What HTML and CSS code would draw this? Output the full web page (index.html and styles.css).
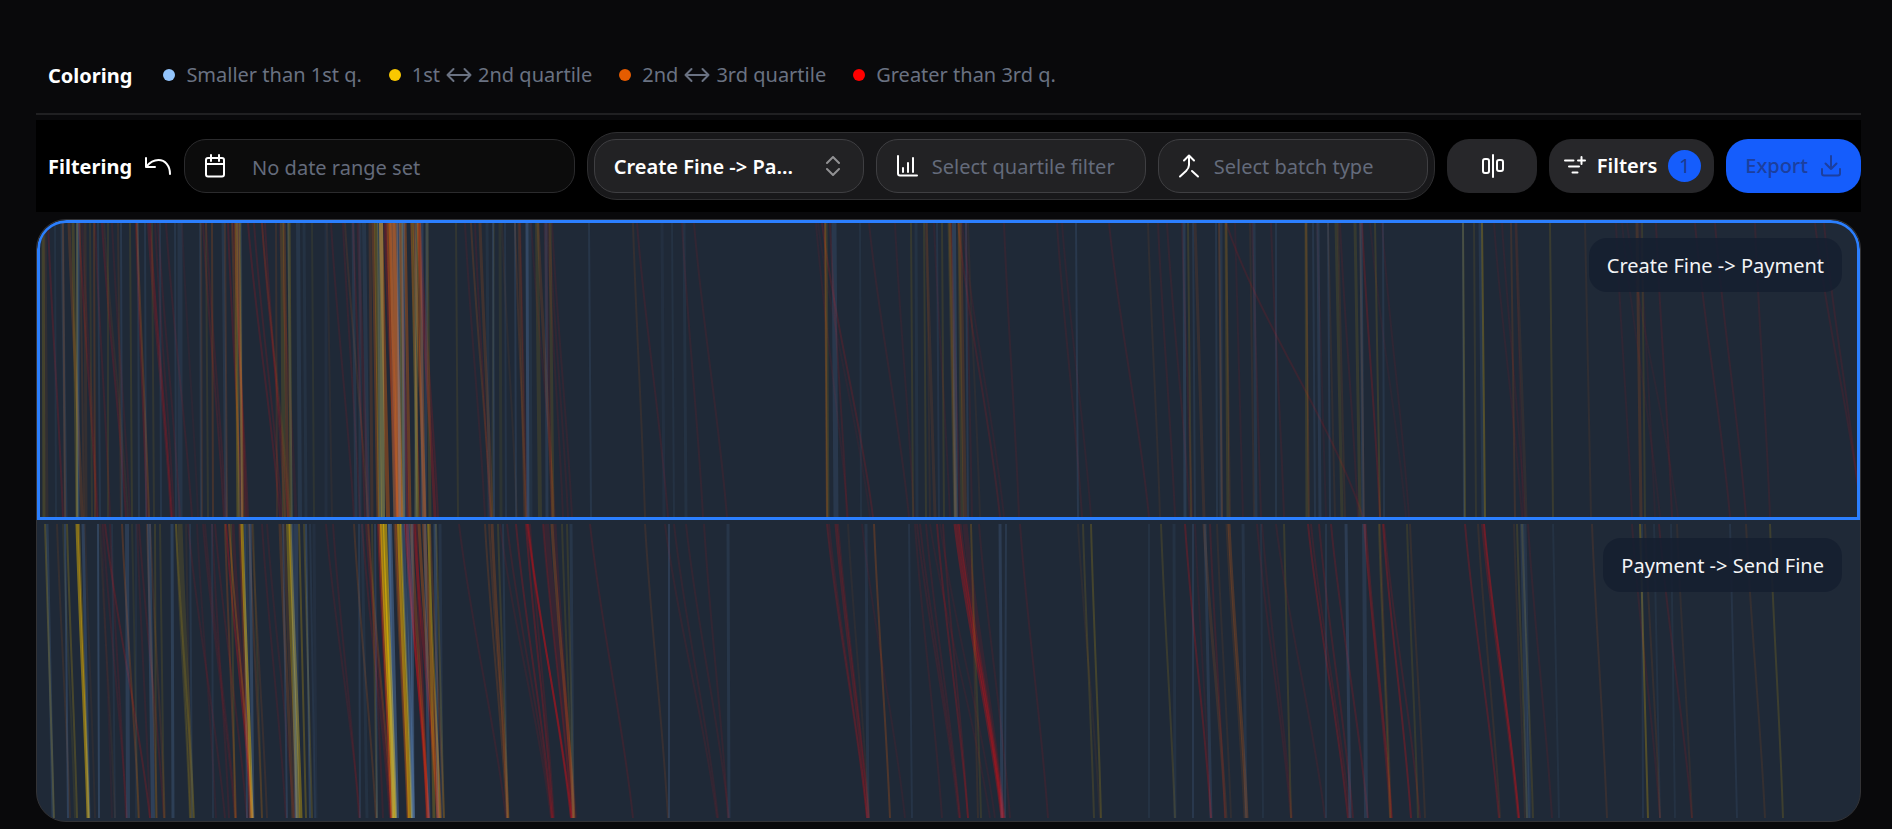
FILE: index.html
```html
<!DOCTYPE html>
<html lang="en">
<head>
<meta charset="utf-8">
<title>Performance spectrum</title>
<link rel="stylesheet" href="styles.css">
</head>
<body>
<main class="page">
  <header class="legend">
    <h2 class="title">Coloring</h2>
    <ul class="legend-list">
      <li class="legend-item"><span class="dot dot-blue"></span>Smaller than 1st q.</li>
      <li class="legend-item"><span class="dot dot-yellow"></span><span class="range">1st <svg class="arrow" viewBox="0 0 26 16"><path d="M1.500 8h23M7.500 2l-6 6 6 6M18.500 2l6 6-6 6"/></svg> 2nd quartile</span></li>
      <li class="legend-item"><span class="dot dot-orange"></span><span class="range">2nd <svg class="arrow" viewBox="0 0 26 16"><path d="M1.500 8h23M7.500 2l-6 6 6 6M18.500 2l6 6-6 6"/></svg> 3rd quartile</span></li>
      <li class="legend-item"><span class="dot dot-red"></span>Greater than 3rd q.</li>
    </ul>
  </header>

  <section class="filters">
    <h2 class="title">Filtering</h2>
    <button class="undo" aria-label="Reset filters">
      <svg class="icon" viewBox="0 0 28 24" width="28" height="24"><path d="M2 4v9h9M2.500 12.500C6 8 10 6 14.500 6 21 6 26 11.500 26 20"/></svg>
    </button>
    <label class="field date">
      <svg class="icon field-icon" viewBox="0 0 22 24" width="22" height="24"><rect x="2" y="4" width="18" height="18.500" rx="2"/><path d="M2 10h18M7 1v6M15 1v6"/></svg>
      <input class="control control-date" type="text" placeholder="No date range set" aria-label="Date range">
    </label>
    <div class="group">
      <label class="field">
        <select class="control control-segment" aria-label="Segment"><option>Create Fine -&gt; Pa...</option></select>
        <svg class="icon chevrons" viewBox="0 0 16 20" width="16" height="20"><path d="M2 7l6-6 6 6M2 13l6 6 6-6"/></svg>
      </label>
      <label class="field">
        <svg class="icon field-icon" viewBox="0 0 22 24" width="22" height="24"><path d="M2 2v17.500a2 2 0 0 0 2 2h17M7 18v-4M12 18V9M17 18V4"/></svg>
        <select class="control control-muted" aria-label="Quartile"><option>Select quartile filter</option></select>
      </label>
      <label class="field">
        <svg class="icon field-icon" viewBox="0 0 22 24" width="22" height="24"><path d="M6 6.500l5-5 5 5M11 2v9c0 3-1 4-3 6l-6 5.500M14 17l6 5.500"/></svg>
        <select class="control control-muted" aria-label="Batch type"><option>Select batch type</option></select>
      </label>
    </div>
    <button class="button compare" aria-label="Compare">
      <svg class="icon" viewBox="0 0 24 24" width="24" height="24"><rect x="2" y="5" width="6" height="14" rx="2"/><path d="M12 1v22"/><rect x="16" y="6" width="6" height="11" rx="2"/></svg>
    </button>
    <button class="button">
      <svg class="icon" viewBox="0 0 22 22" width="22" height="22"><path d="M1 5.500h8.500M5 11.500h10M8.500 17.500h5M17.500 2v7M14 5.500h7"/></svg>
      Filters <span class="badge">1</span>
    </button>
    <button class="button export" disabled>
      Export
      <svg class="icon" viewBox="0 0 22 24" width="22" height="24"><path d="M2 15v4.500a2 2 0 0 0 2 2h14a2 2 0 0 0 2-2V15M11 2v13M5.500 9.500L11 15l5.500-5.500"/></svg>
    </button>
  </section>

  <section class="spectrum">
    <article class="segment selected">
      <svg class="chart" id="chart-first" viewBox="37 0 1823 294" preserveAspectRatio="none"></svg>
      <h3 class="label">Create Fine -&gt; Payment</h3>
    </article>
    <article class="segment">
      <svg class="chart" id="chart-second" viewBox="37 0 1823 294" preserveAspectRatio="none"></svg>
      <h3 class="label">Payment -&gt; Send Fine</h3>
    </article>
  </section>
</main>
<script src="chart.js"></script>
</body>
</html>
```

FILE: styles.css
```css
* { box-sizing: border-box; }

body {
  margin: 0;
  background: #09090b;
  color: #fff;
  font: 20px/28px "Noto Sans", "Open Sans", sans-serif;
}

h2, h3, ul { margin: 0; padding: 0; }

button, input, select { font: inherit; color: inherit; margin: 0; }

.page { padding: 37px 31px 7px 36px; }

.title { padding-top: 2px; font-size: 20px; line-height: 28px; font-weight: 700; }

.legend {
  display: flex;
  align-items: center;
  gap: 31px;
  height: 78px;
  padding: 0 12px;
  border-bottom: 2px solid #202022;
}

.legend-list { display: flex; gap: 27px; list-style: none; color: #6a7282; }

.legend-item { display: flex; align-items: center; gap: 11px; white-space: nowrap; }

.range { display: flex; align-items: center; gap: 6px; }

.dot { width: 12px; height: 12px; border-radius: 50%; }
.dot-blue { background: #93c5fd; }
.dot-yellow { background: #f9c800; }
.dot-orange { background: #e65c00; }
.dot-red { background: #ff0000; }

.arrow, .icon {
  flex: none;
  fill: none;
  stroke: currentColor;
  stroke-width: 2;
  stroke-linecap: round;
  stroke-linejoin: round;
}

.arrow { width: 26px; height: 16px; }

.filters {
  display: flex;
  align-items: center;
  gap: 12px;
  margin: 5px 0 7px;
  padding: 12px 0 12px 12px;
  background: #000;
}

.undo { display: flex; padding: 0; border: 0; background: none; }

.field { position: relative; display: block; }

.date { flex: 1; }

.control {
  display: block;
  width: 270px;
  height: 54px;
  padding: 2px 19px 0;
  border: 1px solid #3f3f42;
  border-radius: 22px;
  background: #222224;
  outline: none;
  appearance: none;
}

.control-date {
  width: 100%;
  padding-left: 67px;
  border-color: #2b2b2d;
  background: #0c0c0c;
}

.control-date::placeholder { color: #646b7b; opacity: 1; }
.control-segment { font-weight: 600; }
.control-muted { padding-left: 55px; color: #646b7b; }

.field-icon { position: absolute; left: 20px; top: 15px; }

.chevrons { position: absolute; right: 23px; top: 17px; color: #919193; }

.group {
  display: flex;
  gap: 12px;
  padding: 6px;
  border: 1px solid #2f2f31;
  border-radius: 30px;
  background: #18181a;
}

.button {
  display: flex;
  align-items: center;
  justify-content: center;
  gap: 11px;
  height: 54px;
  min-width: 90px;
  padding: 0 13px 0 15px;
  border: 0;
  border-radius: 22px;
  background: #27272a;
  font-weight: 600;
}

.badge {
  width: 33px;
  height: 32px;
  border-radius: 50%;
  background: #155dfc;
  color: #1c398e;
  font-weight: 400;
  line-height: 32px;
  text-align: center;
}

.export {
  gap: 12px;
  padding: 0 19px;
  background: #155dfc;
  color: #1c3f9e;
  font-weight: 500;
}

.spectrum {
  overflow: hidden;
  border: 1px solid #333336;
  border-radius: 30px;
  background: #1f2937;
}

.segment { position: relative; padding: 4px 0 3px; }

.selected { padding: 3px 0; border-radius: 30px 30px 0 0; overflow: hidden; }

.selected::after {
  content: "";
  position: absolute;
  inset: 0;
  border: 3px solid #2b7fff;
  border-radius: 29px 29px 0 0;
}

.chart { display: block; width: 100%; height: 294px; }

.label {
  position: absolute;
  top: 18px;
  right: 18px;
  padding: 14px 18px 12px;
  border-radius: 18px;
  background: #161f30e0;
  color: #f3f4f6;
  font-size: 20px;
  font-weight: 400;
}
```

FILE: chart.js
```js
// Each token: colour key, start x, end x, optional stroke width, optional opacity in percent.
const colors = { b: "#6ea4e6", y: "#f0c000", o: "#e0600c", r: "#d01018" };
const order = "royb";

const first = `y43,44,3,18 o45,47,3,10 r48,63,2,22 b55,56,2,8 b62,66,3,12 o63,65,2,22 o69,82,3,22 y73,77,3,18 y77,77,2,20
b78,78,3,25 o80,84,2,15 r79,97,2,25 r82,98,2,12 o85,86,3,12 y90,92,2,10 o94,95,2,22 r95,110,2,16 b98,100 r102,126,2,22
o104,128,2,10 y108,108,2,10 r112,130,2,12 b121,122,2,14 o118,121,2,12 y130,132,2,12 o137,149,2,28 r136,147,2,25 b138,139
b145,146 y152,154,2,10 r150,172,2,30 r148,171,2,22 r155,174,2,14 r158,180,2,14 b160,161 r166,192,2,14 b180,180,5,10
r182,198,2,8 b175,176 o201,202,2,15 y206,208,2,10 o212,213,2,22 b200,201 r203,224,2,18 r206,226,2,15 b223,226,3,12
o225,227,2,18 r228,242,2,22 o232,240,2,22 y236,238,3,26 o238,243,3,34 y240,242,2,22 b238,240,4,8 r235,246,2,25 r233,248,2,18 b241,242
r248,280,2,22 r254,282,2,18 r262,288,2,22 r265,285,2,18 o262,290,2,12 o276,277,2,15 y282,284,4,15 o284,288,3,25
y289,291,3,22 b288,292 r280,296,3,10 b298,300,4,12 b304,306,3,8 y312,314,2,8 b326,326,3,6 r331,354,2,14 o327,332,2,8
r343,360,2,14 o345,368,2,14 r353,365,2,18 b353,356,3,12 b364,368,4,12 o370,372,3,18 b360,360,3,10 r358,368,3,14
y376,380,4,25 o373,378,3,30 y381,383,4,35 o381,388,4,45 b380,382,6,20 r385,397,3,26 o389,396,5,45 o392,400,7,50 b398,400,3,28
b394,397,8,12 o395,399,5,40 r400,408,3,30 y401,403,4,26 o405,410,3,40 b402,405,6,8 r386,402,2,18 b403,404,3,24 y412,418,3,26 o414,425,3,34 y417,416,3,20
r418,435,3,32 o419,424,4,38 b416,416,3,16 b422,422,3,18 y427,430,3,15 b427,425,3,15 r420,438,2,20 r411,420,2,20
y456,458,2,10 r465,485,2,12 o471,491,2,20 o480,492,3,20 r475,490,2,14 b487,489,3,8 y494,492,2,8 b493,494,2,18 y500,501,3,8
b505,506,2,10 o502,517,2,8 o515,526,2,16 b515,516,2,14 r520,527,2,12 b527,528,3,28 b530,531,3,8 o519,525,3,18 y537,540,4,12
o538,553,3,18 r531,555,2,10 b546,547,3,14 y550,553,3,14 r545,552,3,12 r552,572,2,12 r549,568,2,12 r547,563,2,12 b589,591
o633,645,2,12 r637,668,2,14 b662,664,3,6 b672,674,2,8 b684,686,3,8 r682,703,2,12 r694,727,2,12 r816,848,2,10 r822,873,2,20
r818,870,2,8 o825,827,2,28 y826,828,3,14 b834,836,5,14 r830,847,2,16 b860,861,2,8 r869,909,2,12 r895,914,2,10 y911,913,2,12
b916,917,3,8 y924,926,2,12 o926,935,3,14 b937,939,2,10 r934,950,2,10 y942,944,2,12 o927,930,2,10 o950,956,3,22 y949,955,3,12
b954,956,4,20 o960,965,4,20 y959,962,3,12 r951,960,2,15 r958,1000,2,18 r962,1004,2,10 b966,968,2,14 r966,972,2,12 o968,980,2,8
r1004,1019,2,12 r1057,1082,2,12 r1062,1091,2,10 b1076,1078,2,14 r1109,1149,2,14 o1148,1160,2,10 r1158,1175,2,12
r1167,1190,2,12 b1184,1185,3,16 r1182,1192,2,12 y1188,1191,2,14 b1193,1195,2,12 o1195,1204,3,14 b1216,1217,2,12
o1219,1222,2,22 b1221,1221,3,12 y1226,1228,3,14 o1226,1230,2,14 r1226,1363,2,16 r1235,1243,2,10 b1254,1256,3,12
r1252,1261,2,12 b1276,1276,2,12 r1271,1284,2,12 o1250,1254,2,10 o1306,1309,2,18 y1306,1307,3,14 b1313,1315,2,12
b1318,1320,3,14 r1317,1326,2,8 b1328,1330,2,14 y1336,1342,3,12 o1338,1345,2,12 r1340,1358,2,12 y1355,1360,3,12
o1328,1335,2,10 b1361,1363,3,16 r1362,1380,2,25 o1360,1364,2,14 y1375,1380,2,14 r1382,1409,2,10 r1370,1406,2,8 b1383,1384,2,12
y1463,1465,2,20 b1463,1464,2,14 y1474,1476,2,10 y1482,1485,2,28 b1480,1483,3,12 r1494,1522,2,10 r1502,1525,2,10 o1511,1515,2,16
o1516,1526,3,10 r1516,1523,2,8 y1550,1553,2,14 o1585,1591,2,10 r1616,1632,2,10 r1622,1660,2,8 r1627,1678,2,8 o1637,1641,3,20
y1642,1645,2,12 r1640,1655,2,8 r1656,1672,2,14 r1695,1730,2,14 r1715,1746,2,14 r1755,1770,2,12 r1815,1862,2,14 r1824,1861,2,14`;

const second = `y45,54,2,22 b47,53,3,16 o57,70,2,12 b65,68,2,22 y67,77,2,22 y63,75,2,8 y77,88,3,50 y79,89,2,30 b83,89,3,22 o78,88,2,12
o85,95,2,8 b98,99,2,25 r102,112,2,8 r103,127,2,14 r105,150,2,25 o100,115,2,8 b112,115,2,8 r110,126,2,14 o122,139,2,25
b127,128,4,18 b136,136,2,6 y132,138,2,8 r139,164,2,16 b149,153,4,22 o147,157,2,18 y155,156,2,14 r137,150,2,12 y160,164,2,12
o150,165,2,14 y180,192,5,14 b172,173,3,20 y176,190,2,14 y176,194,2,16 o186,191,2,8 b190,192,2,12 r188,225,2,14 r197,216,2,10
r203,235,2,14 b212,213,2,10 r205,236,2,12 r212,229,2,14 r215,247,2,16 o225,236,2,25 r226,252,2,38 o229,253,2,38 r233,251,3,16
r240,250,4,12 y231,235,2,14 y242,252,3,55 o240,250,2,22 b245,247,2,20 b250,253,3,25 b247,250,2,12 o249,262,2,18 y253,262,2,10
o252,267,2,14 r262,286,2,14 r267,294,2,12 o280,293,3,22 b283,287,2,18 y288,298,4,35 y290,301,3,40 b292,296,3,22 b296,297,4,18
y299,306,2,25 o284,296,3,15 y304,312,2,18 b306,310,2,22 b310,315,2,10 b314,316,3,6 r326,360,2,14 r333,359,2,14 b359,360,2,14
o354,376,2,20 o368,392,2,25 b362,367,3,8 r362,390,2,18 r369,383,2,14 y372,377,2,14 b375,377,2,18 y382,394,4,60 y385,395,4,60
o380,392,3,50 b390,397,4,35 b389,393,3,22 r378,391,2,35 r366,391,2,20 y399,410,4,50 o397,409,4,30 b403,413,4,25 y401,412,2,35
o395,408,3,28 r407,428,3,38 r405,429,2,40 b412,413,3,25 o411,428,3,32 r416,427,3,25 b408,413,4,22 o419,438,3,38 r414,438,3,35
y428,440,2,30 o424,440,4,35 o430,444,2,20 b435,438,3,22 y429,434,3,25 b425,429,3,22 b440,442,3,10 y436,444,2,16 r459,506,2,14
o485,507,2,20 o492,508,3,28 o489,508,2,18 y498,508,2,14 b503,507,2,12 r507,552,2,16 r500,551,2,12 r516,552,2,28 r526,553,2,30
r528,571,2,45 r530,554,2,16 r527,572,2,30 r543,572,2,20 r546,574,6,14 o552,574,3,30 r555,573,3,14 y562,573,2,12 y567,574,2,12
b571,573,3,12 r590,633,2,16 o645,668,2,14 b669,669,2,18 r665,717,2,12 r674,718,2,12 r686,729,2,12 r704,728,2,12 b728,729,3,12
r827,867,2,24 r829,867,2,14 r836,868,3,25 r838,869,2,16 o848,869,2,8 b866,868,3,10 r862,905,2,10 o874,890,2,28 b909,912,2,10
r915,942,2,12 r917,959,2,14 r920,960,2,14 r926,960,2,14 r937,968,2,28 r943,968,2,18 r940,995,2,10 r930,990,2,10 r955,1002,3,38
r958,1003,3,38 r960,1004,3,20 r965,1003,5,14 y971,981,2,12 o971,978,2,12 r979,1010,2,12 b1000,1002,3,18 b1006,1005,2,14
r1020,1048,2,14 y1083,1094,2,14 y1091,1101,2,20 o1078,1100,2,8 b1149,1149,2,8 y1161,1175,2,14 b1174,1175,3,8 r1185,1211,2,30
b1193,1193,2,14 r1195,1211,2,10 b1205,1211,3,14 o1204,1226,3,16 r1210,1225,2,18 o1217,1231,2,10 o1229,1247,3,26 o1227,1245,3,12
b1243,1246,3,10 b1261,1263,2,8 r1257,1291,2,14 r1262,1292,2,12 y1284,1291,2,14 r1276,1325,2,12 r1308,1348,2,30 r1311,1350,2,16
r1319,1353,2,20 b1326,1326,2,12 r1331,1368,2,22 b1346,1350,3,18 b1364,1366,4,14 r1365,1391,3,25 r1364,1392,2,18 o1380,1391,2,14
y1379,1390,2,14 r1383,1411,2,34 r1384,1420,2,18 y1407,1418,2,12 o1410,1425,2,12 r1465,1499,2,28 r1484,1519,2,50 r1482,1518,2,25
o1478,1500,2,12 o1514,1525,2,10 y1517,1527,2,14 b1522,1528,4,14 b1525,1530,3,10 y1522,1533,2,14 r1528,1552,2,12 b1553,1559,2,8
o1592,1607,2,14 r1632,1660,2,12 y1640,1648,2,28 b1642,1643,2,10 b1654,1660,2,8 o1645,1660,2,12 b1671,1675,2,8 r1659,1692,2,16
b1730,1737,2,10 o1746,1765,2,12 o1677,1692,2,10 y1770,1783,2,16`;

function draw(id, data, strength) {
  const svg = document.getElementById(id);
  const tokens = data.trim().split(/\s+/);
  tokens.sort((a, b) => order.indexOf(a[0]) - order.indexOf(b[0]));
  for (const token of tokens) {
    const [x0, x1, width = 2, alpha = 12] = token.slice(1).split(",").map(Number);
    const dx = x1 - x0;
    const path = document.createElementNS("http://www.w3.org/2000/svg", "path");
    path.setAttribute("d", `M${x0} 0C${x0 + dx * 0.24} 98 ${x0 + dx * 0.76} 196 ${x1} 294`);
    path.setAttribute("fill", "none");
    path.setAttribute("stroke", colors[token[0]]);
    path.setAttribute("stroke-width", width);
    path.setAttribute("stroke-opacity", alpha * strength / 100);
    svg.appendChild(path);
  }
}

draw("chart-first", first, 0.9);
draw("chart-second", second, 0.9);
```
